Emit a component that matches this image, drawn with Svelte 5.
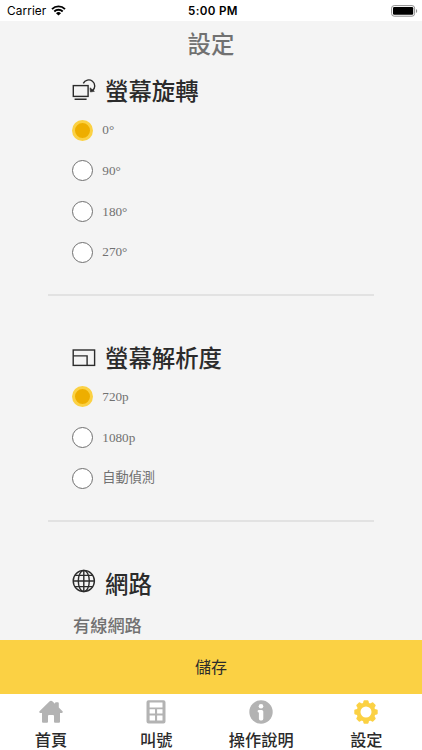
<script>
  let rotation = $state('0°');
  let resolution = $state('720p');

  const rotations = ['0°', '90°', '180°', '270°'];
  const resolutions = ['720p', '1080p', '自動偵測'];

  const tabs = [
    { id: 'home', label: '首頁' },
    { id: 'call', label: '叫號' },
    { id: 'info', label: '操作說明' },
    { id: 'settings', label: '設定' },
  ];
  let active = $state('settings');
</script>

<div class="screen">
  <div class="status-bar">
    <div class="status-left">
      <span class="carrier">Carrier</span>
      <svg viewBox="0 0 15 11" width="15" height="11">
        <path d="M1 4.1a9.2 9.2 0 0 1 13 0M3.3 6.5a6 6 0 0 1 8.4 0" fill="none" stroke="#000" stroke-width="1.9" />
        <path d="M7.5 10.6 5 8.2a3.6 3.6 0 0 1 5 0z" />
      </svg>
    </div>
    <div class="time">5:00 PM</div>
    <div class="status-right">
      <svg viewBox="0 0 27 12" width="27" height="12">
        <rect x="0.6" y="0.6" width="23" height="10.6" rx="2.6" fill="none" stroke="#8e8e8e" stroke-width="1" />
        <rect x="2" y="2" width="20.2" height="7.8" rx="1.2" />
        <path d="M25 4v4c1.6-.6 1.6-3.4 0-4z" fill="#8e8e8e" />
      </svg>
    </div>
  </div>

  <main>
    <h1>設定</h1>

    <section>
      <div class="heading">
        <svg viewBox="0 0 24 24" width="24" height="24" class="line-icon">
          <rect x="1.3" y="6.6" width="14.8" height="10.8" />
          <path d="M2.6 20.2h12M11.3 4.400a6 6 0 1 1 9.200 7.200" />
          <path d="M18 8.800 18.400 13 22.400 12.300z" fill="#2b2b2b" stroke-width="0.6" />
        </svg>
        <h2>螢幕旋轉</h2>
      </div>
      {#each rotations as option}
        <label class="option">
          <input type="radio" name="rotation" value={option} bind:group={rotation} />
          <span class="dot"></span>
          <span class="option-text">{option}</span>
        </label>
      {/each}
    </section>

    <section>
      <div class="heading">
        <svg viewBox="0 0 24 24" width="24" height="24" class="line-icon">
          <rect x="1.2" y="4" width="21.4" height="15.4" />
          <path d="M1.2 9.9h13.9v9.5" />
        </svg>
        <h2>螢幕解析度</h2>
      </div>
      {#each resolutions as option}
        <label class="option">
          <input type="radio" name="resolution" value={option} bind:group={resolution} />
          <span class="dot"></span>
          <span class="option-text">{option}</span>
        </label>
      {/each}
    </section>

    <section>
      <div class="heading network">
        <svg viewBox="0 0 24 24" width="24" height="24" class="line-icon">
          <circle cx="11.8" cy="12" r="10.6" />
          <ellipse cx="11.8" cy="12" rx="5.5" ry="10.6" />
          <path d="M11.8 1.4v21.2M1.2 12h21.2M3.1 6.4h17.4M3.1 17.6h17.4" />
        </svg>
        <h2>網路</h2>
      </div>
      <h3>有線網路</h3>
    </section>
  </main>

  <button class="save">儲存</button>

  <nav>
    {#each tabs as tab}
      <button class="tab" class:active={active === tab.id} onclick={() => (active = tab.id)}>
        <svg viewBox="0 0 24 24" width="24" height="24" fill="currentColor">
          {#if tab.id === 'home'}
            <path d="M12 .8Q12.900.8 13.600 1.500L16 3.700V3.200Q16 2.200 17 2.200h1.800q1 0 1 1v4.400l3.700 3.600c.7.8.3 1.700-.6 1.700h-1.900v8.900q0 1-1 1h-4q-1 0-1-1v-5.700q0-1-1-1h-4q-1 0-1 1v5.700q0 1-1 1H4q-1 0-1-1v-8.900H1.100c-.9 0-1.300-.9-.6-1.700l9.900-9.700Q11.100.8 12 .8z" />
          {:else if tab.id === 'call'}
            <path fill-rule="evenodd" d="M4.500.300h15q2 0 2 2v19.200q0 2-2 2h-15q-2 0-2-2V2.300q0-2 2-2zM5.600 2.500v4.900h12.900V2.500zM5.600 9.200v4.200h5.400V9.200zM13.100 9.200v4.200h5.400V9.200zM5.600 15.500v4.900h5.400v-4.900zM13.100 15.500v4.900h5.400v-4.900z" />
          {:else if tab.id === 'info'}
            <circle cx="12" cy="12" r="11.7" />
            <circle cx="12" cy="6.2" r="2.3" fill="#fff" />
            <path d="M9.900 9.900h2.700q1.700 0 1.700 1.700v7.200q0 1.600-1.600 1.600h-1.200q-1.600 0-1.600-1.600v-6.300q-1.300 0-1.300-1.300t1.300-1.300z" fill="#fff" />
          {:else}
            {#each [0, 45, 90, 135, 180, 225, 270, 315] as angle}
              <path d="M8.700 4.500 9.500 1Q9.700.3 10.400.3h3.200q.7 0 .9.700l.8 3.500z" transform="rotate({angle} 12 12)" />
            {/each}
            <circle cx="12" cy="12" r="7.5" fill="none" stroke="currentColor" stroke-width="4" />
          {/if}
        </svg>
        <span>{tab.label}</span>
      </button>
    {/each}
  </nav>
</div>

<style>
  :global(body) {
    margin: 0;
    overflow: hidden;
  }

  .screen {
    display: flex;
    flex-direction: column;
    width: 422px;
    height: 750px;
    overflow: hidden;
    background: #f4f4f4;
    font-family: "Noto Sans CJK TC", sans-serif;
    color: #2b2b2b;
  }

  .status-bar {
    display: grid;
    grid-template-columns: 1fr auto 1fr;
    align-items: center;
    flex: none;
    height: 21px;
    box-sizing: border-box;
    padding: 0 5px 0 7px;
    background: #fff;
    font-family: Inter, sans-serif;
    font-size: 12px;
    color: #000;
  }

  .status-left {
    display: flex;
    align-items: center;
    gap: 5px;
  }

  .carrier {
    font-size: 11.8px;
    letter-spacing: 0.1px;
  }

  .time {
    margin-left: 2px;
    font-weight: 600;
    font-size: 11.6px;
    letter-spacing: 0.35px;
  }

  .status-right {
    display: flex;
    justify-content: flex-end;
    margin-right: -1px;
  }

  main {
    flex: 1;
    min-height: 0;
    overflow: hidden;
  }

  h1,
  h2,
  h3 {
    margin: 0;
    font-weight: 500;
  }

  h1 {
    height: 53px;
    font-size: 23.4px;
    line-height: 45px;
    text-align: center;
    color: #717171;
  }

  section {
    margin: 0 48px 44.7px;
    padding: 0 24px 21.6px;
    border-bottom: 2px solid #e2e2e2;
  }

  .heading {
    display: flex;
    align-items: center;
    gap: 9px;
    height: 34px;
    margin-bottom: 1.8px;
  }

  h2 {
    margin-top: -2px;
    font-size: 23.4px;
    line-height: 34px;
  }

  h3 {
    padding: 7px 0 0 1px;
    font-size: 17.2px;
    line-height: 30px;
    color: #717171;
  }

  .line-icon {
    flex: none;
    fill: none;
    stroke: #2b2b2b;
    stroke-width: 1.4;
  }

  .network .line-icon {
    margin-top: -5px;
  }

  .option {
    display: flex;
    align-items: center;
    height: 40.7px;
  }

  .option input {
    display: none;
  }

  .dot {
    box-sizing: border-box;
    width: 21px;
    height: 21px;
    margin-left: 0.3px;
    border: 1px solid #707070;
    border-radius: 50%;
    background: #fff;
  }

  input:checked + .dot {
    border: 3px solid #fbd144;
    background: #eeae00;
  }

  .option-text {
    margin-left: 9px;
    font-family: "Liberation Serif", "Noto Sans CJK TC", serif;
    font-size: 13.2px;
    line-height: 20px;
    color: #717171;
  }

  .save {
    flex: none;
    height: 54px;
    padding: 0 0 2px;
    border: none;
    background: #fbd144;
    font-family: inherit;
    font-size: 16px;
    color: #2b2b2b;
  }

  nav {
    display: grid;
    grid-template-columns: repeat(4, 105.1px);
    flex: none;
    height: 56px;
    background: #fff;
  }

  .tab {
    display: flex;
    flex-direction: column;
    align-items: center;
    padding: 6px 0 0;
    margin-left: -3px;
    border: none;
    background: none;
    font-family: inherit;
    font-size: 16.2px;
    font-weight: 500;
    line-height: 20px;
    color: #b3b3b3;
  }

  .tab span {
    margin-top: 5px;
    color: #2b2b2b;
    white-space: nowrap;
  }

  .tab.active {
    color: #fbd144;
  }
</style>
